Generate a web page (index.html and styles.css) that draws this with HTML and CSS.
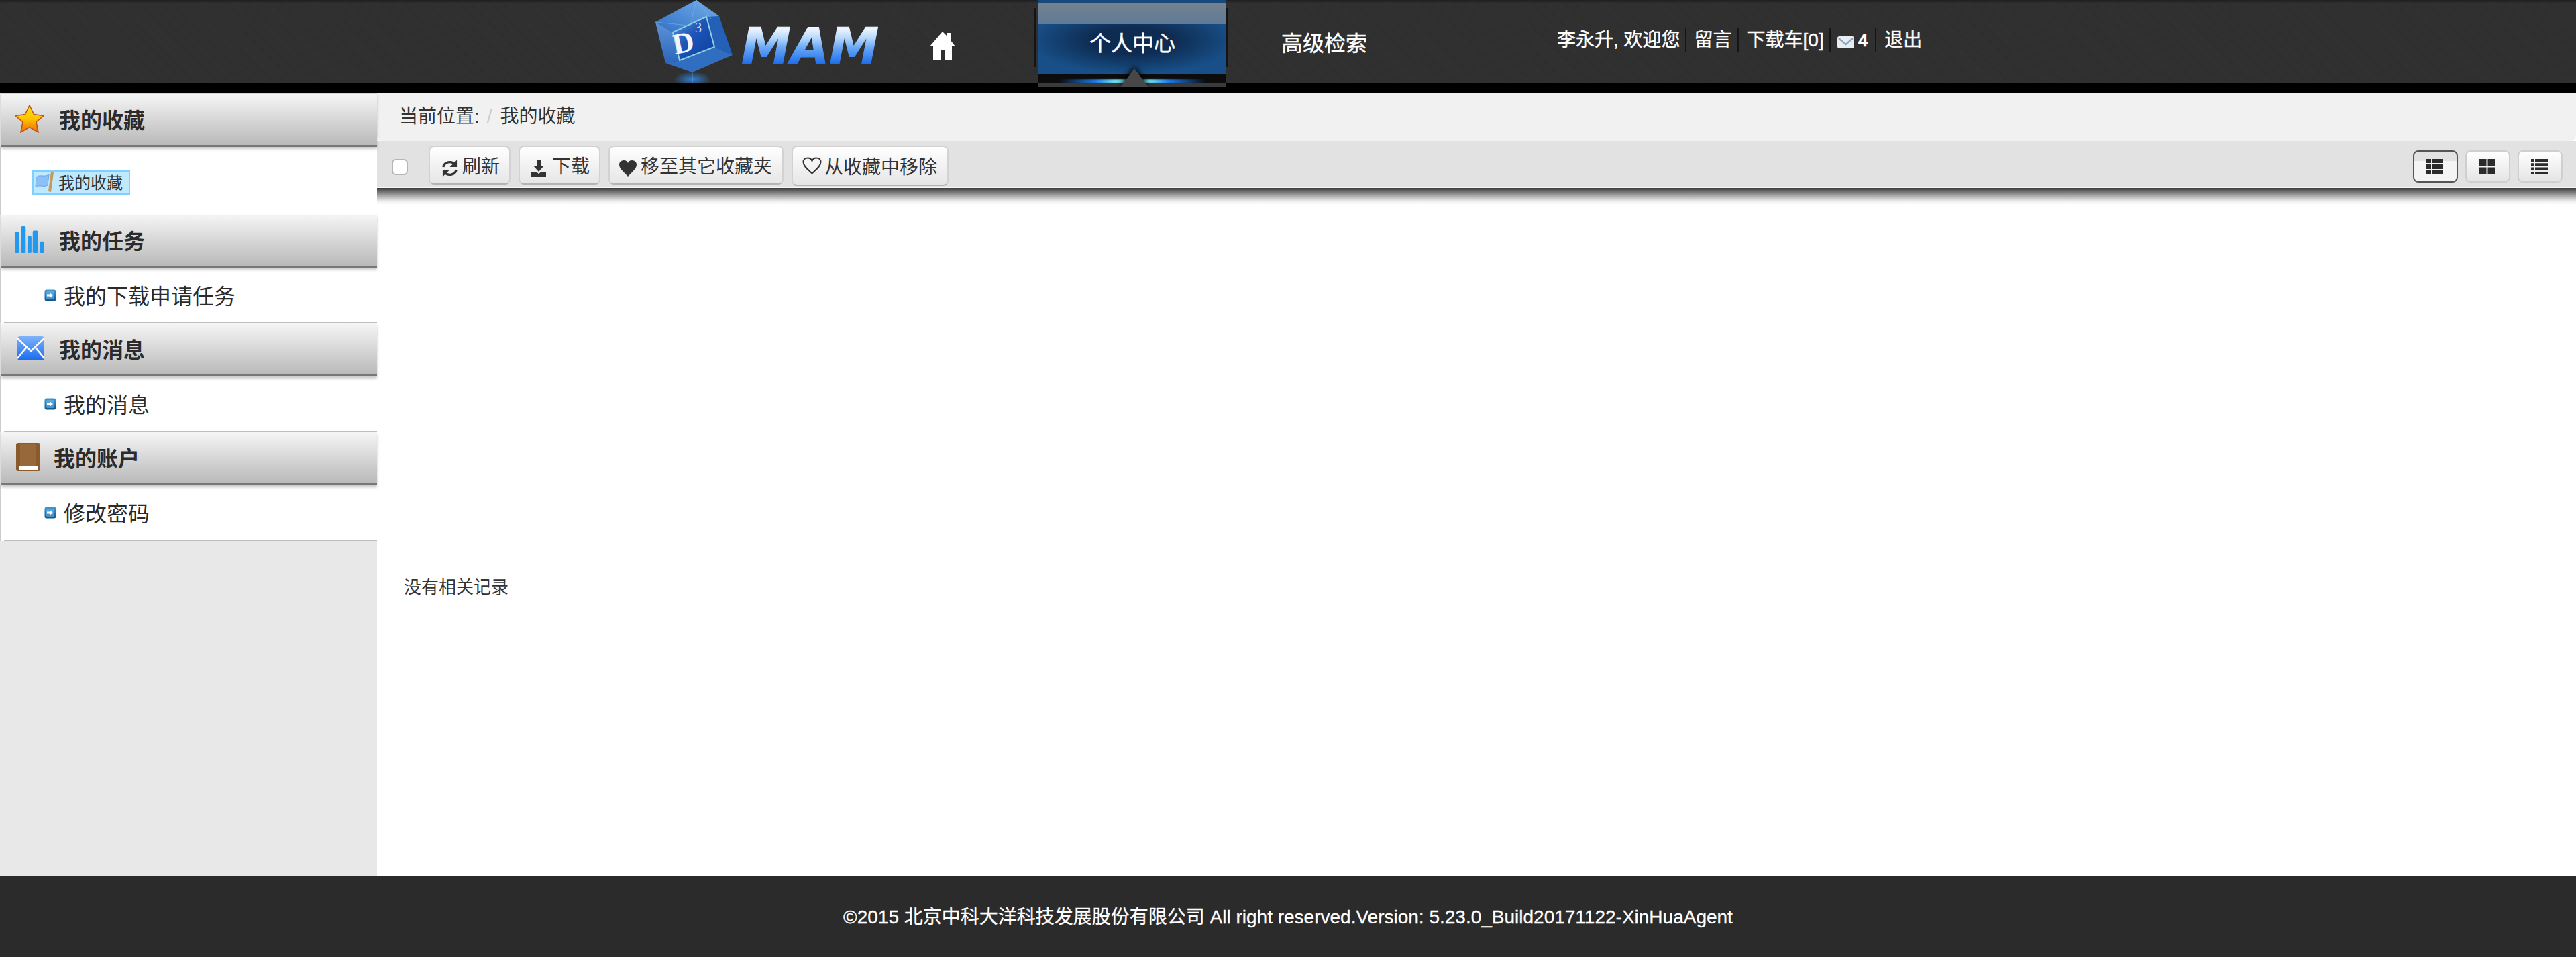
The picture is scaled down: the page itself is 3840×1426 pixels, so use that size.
FILE: index.html
```html
<!DOCTYPE html>
<html lang="zh-CN">
<head>
    <meta charset="UTF-8">
    <title>MAM 个人中心</title>
    <link rel="stylesheet" href="styles.css">
</head>
<body>
    <svg class="defs" width="0" height="0">
        <defs>
            <linearGradient id="bulletFill" x1="0" y1="0" x2="0" y2="1">
                <stop offset="0" stop-color="#3f9ad8"/>
                <stop offset="1" stop-color="#0b5590"/>
            </linearGradient>
            <symbol id="bullet" viewBox="0 0 18 18">
                <rect x="0.5" y="0.5" width="17" height="17" rx="3" fill="url(#bulletFill)"/>
                <rect x="3" y="3" width="12" height="12" rx="1.500" fill="#7cc4ec" opacity="0.5"/>
                <path d="M4 7.500h4V5l5 4-5 4v-2.500H4z" fill="#fff"/>
            </symbol>
        </defs>
    </svg>

    <div class="topbar">
        <a class="logo">
            <svg width="345" height="124" viewBox="0 0 345 124">
                <defs>
                    <linearGradient id="mamFill" gradientUnits="userSpaceOnUse" x1="0" y1="41" x2="0" y2="95">
                        <stop offset="0" stop-color="#f4f9ff"/>
                        <stop offset="0.3" stop-color="#b5d6fb"/>
                        <stop offset="0.55" stop-color="#6aa9f6"/>
                        <stop offset="1" stop-color="#1f6eea"/>
                    </linearGradient>
                    <linearGradient id="cubeLeft" x1="0" y1="0" x2="0" y2="1">
                        <stop offset="0" stop-color="#5c93d8"/>
                        <stop offset="1" stop-color="#2c66bb"/>
                    </linearGradient>
                    <linearGradient id="cubeTop" x1="0" y1="1" x2="1" y2="0">
                        <stop offset="0" stop-color="#2f6fc8"/>
                        <stop offset="1" stop-color="#74aee8"/>
                    </linearGradient>
                    <linearGradient id="cubeScreen" x1="0" y1="0" x2="1" y2="1">
                        <stop offset="0" stop-color="#5d97d8"/>
                        <stop offset="0.45" stop-color="#1c54b8"/>
                        <stop offset="1" stop-color="#0d3f9f"/>
                    </linearGradient>
                    <radialGradient id="cubeGlow">
                        <stop offset="0" stop-color="#2f7fd6"/>
                        <stop offset="1" stop-color="#2f7fd6" stop-opacity="0"/>
                    </radialGradient>
                </defs>
                <ellipse cx="62" cy="118" rx="28" ry="11" fill="url(#cubeGlow)"/>
                <polygon points="7,33 68,0 102,24 33,48" fill="url(#cubeTop)"/>
                <polygon points="7,33 33,48 43,90 22,94" fill="url(#cubeLeft)"/>
                <polygon points="102,24 122,82 95,70 83,25" fill="#2460b8"/>
                <polygon points="43,90 95,70 122,82 62,108 22,94" fill="#2f6ec0"/>
                <polygon points="33,48 83,25 95,70 43,90" fill="url(#cubeScreen)" stroke="#8fd0dc" stroke-width="2"/>
                <path d="M68 0l-9 38M7 33l50 5M68 0l22 28M62 108v16" stroke="#7ab8ec" stroke-width="1" opacity="0.6" fill="none"/>
                <text class="logo-d" x="34" y="78" transform="rotate(-12 50 70)">D</text>
                <text class="logo-three" x="66" y="48">3</text>
                <text class="logo-mam" x="135" y="95" textLength="205" lengthAdjust="spacingAndGlyphs" fill="url(#mamFill)" stroke="url(#mamFill)" stroke-width="1">MAM</text>
            </svg>
        </a>
        <a class="home-link">
            <svg width="38" height="42" viewBox="0 0 38 42">
                <path d="M19 0l7 7V2h5v11l7 9h-5v20H23V27h-7v15H5V22H0z" fill="#fff"/>
            </svg>
        </a>
        <span class="nav-sep nav-sep-left"></span>
        <a class="nav-tab active">
            个人中心
            <span class="tab-glow"></span>
            <span class="tab-arrow"></span>
        </a>
        <span class="nav-sep"></span>
        <a class="nav-tab search-tab">高级检索</a>
        <div class="user-links">
            <a class="user-link">李永升, 欢迎您</a>
            <a class="user-link">留言</a>
            <a class="user-link">下载车[0]</a>
            <a class="user-link mail-link">
                <svg width="25" height="18" viewBox="0 0 25 18">
                    <rect width="25" height="18" rx="3" fill="#e8edf2"/>
                    <path d="M2 3l10.500 9L23 3" fill="none" stroke="#8fa8bd" stroke-width="2.500"/>
                </svg>
                <b>4</b>
            </a>
            <a class="user-link">退出</a>
        </div>
    </div>

    <div class="page">
        <div class="sidebar">
            <h3 class="side-head first">
                <svg class="side-icon" width="44" height="42" viewBox="0 0 44 42">
                    <defs>
                        <linearGradient id="starFill" x1="0" y1="0" x2="0" y2="1">
                            <stop offset="0" stop-color="#ffe600"/>
                            <stop offset="0.5" stop-color="#ffc400"/>
                            <stop offset="1" stop-color="#ef6a00"/>
                        </linearGradient>
                    </defs>
                    <path d="M22 1l6.500 13.500L43 16.500 32 26l3 15-13-7.500L9 41l3-15L1 16.500l14.500-2z" fill="url(#starFill)" stroke="#b9531a" stroke-width="1.500" stroke-linejoin="miter"/>
                </svg>
                我的收藏
            </h3>
            <div class="side-panel fav-panel">
                <a class="fav-node">
                    <svg width="30" height="32" viewBox="0 0 30 32">
                        <path d="M2 9c6-5 11 1 19-4l-2 16c-7 4-12-2-18 3z" fill="#8cc0f7" stroke="#6aa7ee"/>
                        <path d="M24 1l4 1-4 29-4-1z" fill="#c79a5c"/>
                    </svg>
                    我的收藏
                </a>
            </div>

            <h3 class="side-head">
                <svg class="side-icon" width="46" height="42" viewBox="0 0 46 42">
                    <g fill="#2299ee">
                        <rect x="0" y="9" width="7" height="33" rx="2"/>
                        <rect x="10" y="0" width="7" height="42" rx="2"/>
                        <rect x="20" y="15" width="6" height="27" rx="2"/>
                        <rect x="28" y="7" width="8" height="35" rx="2"/>
                        <rect x="39" y="24" width="7" height="18" rx="2"/>
                    </g>
                </svg>
                我的任务
            </h3>
            <div class="side-panel">
                <a class="side-item"><svg class="bullet" width="18" height="18"><use href="#bullet"/></svg>我的下载申请任务</a>
            </div>

            <h3 class="side-head">
                <svg class="side-icon mail-icon" width="40" height="36" viewBox="0 0 40 36">
                    <defs>
                        <linearGradient id="mailFill" x1="0" y1="0" x2="0" y2="1">
                            <stop offset="0" stop-color="#7fb2fa"/>
                            <stop offset="1" stop-color="#1a6cf0"/>
                        </linearGradient>
                    </defs>
                    <rect width="40" height="36" rx="4" fill="url(#mailFill)"/>
                    <path d="M0 3l20 19L40 3M0 33l13-16M40 33L27 17" fill="none" stroke="#fff" stroke-width="2.500"/>
                </svg>
                我的消息
            </h3>
            <div class="side-panel">
                <a class="side-item"><svg class="bullet" width="18" height="18"><use href="#bullet"/></svg>我的消息</a>
            </div>

            <h3 class="side-head">
                <svg class="side-icon book-icon" width="36" height="42" viewBox="0 0 36 42">
                    <rect width="36" height="42" rx="3" fill="#8a5a2c"/>
                    <rect x="6" y="1" width="24" height="33" fill="#96683a"/>
                    <rect x="4" y="35" width="29" height="5" fill="#fff"/>
                </svg>
                我的账户
            </h3>
            <div class="side-panel">
                <a class="side-item"><svg class="bullet" width="18" height="18"><use href="#bullet"/></svg>修改密码</a>
            </div>
        </div>

        <div class="content">
            <div class="breadcrumb">
                <span>当前位置:</span>
                <span class="crumb-sep">/</span>
                <span>我的收藏</span>
            </div>
            <div class="toolbar">
                <input class="check-all" type="checkbox">
                <div class="btn-group">
                    <button class="btn btn-refresh">
                        <svg class="btn-icon" width="25" height="28" viewBox="0 0 26 28">
                            <path d="M3 12a10 9 0 0 1 18-4M23 16a10 9 0 0 1-18 4" fill="none" stroke="#333" stroke-width="3.500"/>
                            <path d="M24 1v11H13zM2 27V16h11z" fill="#333"/>
                        </svg>
                        刷新
                    </button>
                    <button class="btn btn-down">
                        <svg class="btn-icon" width="22" height="26" viewBox="0 0 22 26">
                            <path d="M8 0h6v9h5l-8 9-8-9h5zM0 18h7l4 3 4-3h7v8H0z" fill="#333"/>
                        </svg>
                        下载
                    </button>
                    <button class="btn">
                        <svg class="btn-icon" width="26" height="24" viewBox="0 0 26 24">
                            <path d="M13 24C8 18 0 13 0 6.500 0 2 4 0 7 0c3 0 5 1.500 6 4 1-2.500 3-4 6-4 3 0 7 2 7 6.500C26 13 18 18 13 24z" fill="#333"/>
                        </svg>
                        移至其它收藏夹
                    </button>
                    <button class="btn btn-tall">
                        <svg class="btn-icon plain" width="29" height="26" viewBox="0 0 29 26">
                            <path d="M14.500 24.500C9 19 1.500 14 1.500 7.500 1.500 3.500 4.500 1.500 8 1.500c3 0 5.500 1.500 6.500 4.500 1-3 3.500-4.500 6.500-4.500 3.500 0 6.500 2 6.500 6 0 6.500-7.500 11.500-13 17z" fill="none" stroke="#333" stroke-width="2"/>
                        </svg>
                        从收藏中移除
                    </button>
                </div>
                <div class="view-group">
                    <button class="view-btn active">
                        <svg width="25" height="23" viewBox="0 0 25 23">
                            <path d="M0 0h7v6H0zM9 0h16v6H9zM0 8h7v7H0zM9 8h16v7H9zM0 17h7v6H0zM9 17h16v6H9z" fill="#2b2b2b"/>
                        </svg>
                    </button>
                    <button class="view-btn">
                        <svg width="23" height="23" viewBox="0 0 23 23">
                            <path d="M0 0h10.500v10.500H0zM12.500 0H23v10.500H12.500zM0 12.500h10.500V23H0zM12.500 12.500H23V23H12.500z" fill="#2b2b2b"/>
                        </svg>
                    </button>
                    <button class="view-btn">
                        <svg width="25" height="23" viewBox="0 0 25 23">
                            <path d="M0 0h4v4H0zM6 0h19v4H6zM0 6.300h4v4H0zM6 6.300h19v4H6zM0 12.600h4v4H0zM6 12.600h19v4H6zM0 19h4v4H0zM6 19h19v4H6z" fill="#2b2b2b"/>
                        </svg>
                    </button>
                </div>
            </div>
            <div class="toolbar-shadow"></div>
            <p class="empty-msg">没有相关记录</p>
        </div>
    </div>

    <div class="footer">©2015 北京中科大洋科技发展股份有限公司 All right reserved.Version: 5.23.0_Build20171122-XinHuaAgent</div>
</body>
</html>
```

FILE: styles.css
```css
html, body {
    height: 100%;
}
body {
    margin: 0;
    height: 100vh;
    display: flex;
    flex-direction: column;
    overflow: hidden;
    background-color: #fff;
    color: #333;
    font-family: "Liberation Sans", "Noto Sans CJK SC", sans-serif;
    font-size: 28px;
}
.defs {
    position: absolute;
}

/* top navigation */
.topbar {
    flex: none;
    height: 124px;
    border-bottom: 14px solid #000;
    display: flex;
    align-items: flex-start;
    padding-left: 970px;
    background-color: #2f2f2f;
    background-image:
        linear-gradient(#1f1f1f, rgba(31, 31, 31, 0) 5px),
        repeating-linear-gradient(45deg, rgba(255, 255, 255, 0.012) 0 1px, rgba(0, 0, 0, 0.012) 1px 2px);
    color: #fff;
    -webkit-text-stroke: 0.4px #fff;
}
.logo {
    display: block;
    width: 345px;
    height: 124px;
    -webkit-text-stroke: 0;
}
.logo svg {
    display: block;
}
.logo-d {
    font-family: "Liberation Serif", serif;
    font-weight: bold;
    font-size: 44px;
    fill: #f2f6fb;
}
.logo-three {
    font-family: "Liberation Serif", serif;
    font-size: 20px;
    fill: #dbe8f6;
}
.logo-mam {
    font-family: "DejaVu Sans", sans-serif;
    font-weight: bold;
    font-style: italic;
    font-size: 74px;
}
.home-link {
    display: block;
    margin: 47px 0 0 71px;
    height: 42px;
}
.home-link svg {
    display: block;
}
.nav-sep {
    width: 3px;
    height: 88px;
    margin-top: 12px;
    background-color: #141414;
}
.nav-sep-left {
    margin-left: 118px;
    margin-right: 3px;
}
.nav-tab {
    display: block;
    height: 130px;
    line-height: 130px;
    font-size: 32px;
    color: #fff;
    text-align: center;
}
.nav-tab.active {
    position: relative;
    width: 280px;
    flex: none;
    background-color: #0c0c0c;
    background-image:
        linear-gradient(#17497f 0 4px, rgba(0, 0, 0, 0) 4px),
        linear-gradient(rgba(0, 0, 0, 0) 4px, #75828f 4px, #5f7a97 36px, rgba(0, 0, 0, 0) 36px),
        radial-gradient(ellipse 55% 45% at 50% 55%, #0e2c52 40%, #184f88 100%);
    background-size: 100% 100%, 100% 100%, 100% 110px;
    background-repeat: no-repeat;
}
.tab-glow {
    position: absolute;
    left: 30px;
    right: 30px;
    bottom: 6px;
    height: 6px;
    background: linear-gradient(90deg, rgba(20, 90, 220, 0), #1c7bf0 25%, #6fe6f5 38%, #6fe6f5 62%, #1c7bf0 75%, rgba(20, 90, 220, 0));
    filter: blur(1px);
}
.tab-arrow {
    position: absolute;
    z-index: 1;
    left: 122px;
    bottom: 0;
    width: 0;
    height: 0;
    border-left: 21px solid transparent;
    border-right: 21px solid transparent;
    border-bottom: 28px solid #474747;
    filter: drop-shadow(0 -3px 4px #000);
}
.nav-tab.active::after {
    content: "";
    position: absolute;
    left: 0;
    right: 0;
    bottom: 0;
    height: 6px;
    background-color: #3a3a3a;
}
.search-tab {
    margin-left: 79px;
    width: 128px;
    flex: none;
}
.user-links {
    display: flex;
    align-items: center;
    height: 36px;
    margin: 42px 0 0 283px;
    line-height: 36px;
    white-space: nowrap;
}
.user-link {
    color: #fff;
    padding: 0 8px 0 12px;
    border-right: 2px solid #151515;
}
.user-link:first-child {
    padding-left: 0;
    padding-right: 7px;
}
.user-link:last-child {
    border-right: 0;
}
.mail-link {
    display: flex;
    align-items: center;
    gap: 6px;
    padding-left: 10px;
    padding-right: 11px;
}
.mail-link svg {
    margin-top: 5px;
}
.mail-link b {
    font-size: 26px;
}

/* page body */
.page {
    flex: 1;
    display: flex;
    min-height: 0;
}
.sidebar {
    flex: none;
    width: 562px;
    background-color: #e8e8e8;
}
.side-head {
    position: relative;
    z-index: 1;
    box-sizing: border-box;
    height: 79px;
    margin: 0 0 0 2px;
    padding: 0 0 2px 20px;
    display: flex;
    align-items: center;
    font-size: 32px;
    font-weight: bold;
    color: #2b2b2b;
    border-bottom: 3px solid #777;
    background: linear-gradient(#f5f5f5, #b9b9b9);
    box-shadow: 0 3px 4px rgba(0, 0, 0, 0.22);
}
.side-head.first {
    height: 81px;
    border-top: 2px solid #d4d4d4;
}
.side-icon {
    flex: none;
    width: 44px;
    margin-right: 22px;
}
.side-icon.mail-icon {
    width: 40px;
    margin-left: 4px;
}
.side-icon.book-icon {
    width: 36px;
    margin-left: 2px;
    margin-right: 20px;
}
.side-panel {
    box-sizing: border-box;
    height: 83px;
    margin-left: 2px;
    padding-left: 4px;
    background-color: #fff;
    box-shadow: -2px 0 0 #ccc;
}
.side-panel.fav-panel {
    height: 101px;
    padding: 35px 0 0 46px;
}
.fav-node {
    display: inline-flex;
    align-items: center;
    box-sizing: border-box;
    width: 146px;
    height: 36px;
    padding: 0 0 3px 2px;
    gap: 5px;
    font-size: 24px;
    color: #333;
    background-color: #bfe9ff;
    border: 2px solid #7fd0ff;
}
.side-item {
    display: flex;
    align-items: center;
    box-sizing: border-box;
    height: 83px;
    padding-left: 60px;
    padding-bottom: 2px;
    font-size: 32px;
    color: #2b2b2b;
    border-bottom: 2px solid #bdbdbd;
}
.bullet {
    flex: none;
    margin: 3px 11px 0 0;
}

/* right side */
.content {
    flex: 1;
    min-width: 0;
}
.breadcrumb {
    box-sizing: border-box;
    height: 72px;
    padding-left: 33px;
    display: flex;
    align-items: center;
    line-height: 72px;
    color: #333;
    background-color: #f1f1f1;
    border-radius: 0 0 8px 8px;
}
.crumb-sep {
    margin: 0 12px 0 11px;
    color: #ccc;
}
.toolbar {
    box-sizing: border-box;
    height: 70px;
    display: flex;
    align-items: flex-start;
    background-color: #e2e2e2;
    border-bottom: 1px solid #f7f7f7;
    padding: 7px 20px 0 22px;
}
.check-all {
    appearance: none;
    box-sizing: border-box;
    width: 24px;
    height: 24px;
    margin: 20px 31px 0 0;
    background-color: #fff;
    border: 2px solid #b5b5b5;
    border-radius: 6px;
}
.btn-group {
    display: flex;
    align-items: flex-start;
    gap: 12px;
}
.btn {
    box-sizing: border-box;
    height: 58px;
    padding: 0 15px 0 14px;
    display: flex;
    align-items: center;
    gap: 6px;
    font-family: inherit;
    font-size: 28px;
    color: #333;
    background: linear-gradient(#fff, #e6e6e6);
    border: 2px solid #d2d2d2;
    border-bottom-color: #b4b4b4;
    border-radius: 8px;
}
.btn.btn-tall {
    height: 60px;
    gap: 4px;
}
.btn-icon {
    flex: none;
    margin-top: 10px;
}
.btn-icon.plain {
    margin-top: 0;
}
.btn-refresh {
    padding-right: 14px;
}
.btn-refresh .btn-icon {
    margin-left: 3px;
}
.btn-down {
    padding-right: 14px;
}
.btn-down .btn-icon {
    margin-left: 3px;
    margin-right: 3px;
}
.view-group {
    margin: 7px 0 0 auto;
    display: flex;
    gap: 11px;
}
.view-btn {
    box-sizing: border-box;
    width: 67px;
    height: 48px;
    padding: 0 3px 0 0;
    display: flex;
    align-items: center;
    justify-content: center;
    background: linear-gradient(#fff, #e4e4e4);
    border: 2px solid #cfcfcf;
    border-radius: 8px;
}
.view-btn.active {
    background: linear-gradient(#e2e2e2 0 14px, #f4f4f4 14px);
    border-color: #555;
}
.toolbar-shadow {
    height: 25px;
    background: linear-gradient(#3c3c3c, #9a9a9a 40%, #efefef 80%, #fff);
}
.empty-msg {
    margin: 552px 0 0 40px;
    line-height: 36px;
    font-size: 26px;
    color: #333;
}

.footer {
    flex: none;
    height: 120px;
    line-height: 121px;
    text-align: center;
    color: #fff;
    background-color: #2b2b2b;
    -webkit-text-stroke: 0.3px #fff;
}
```
